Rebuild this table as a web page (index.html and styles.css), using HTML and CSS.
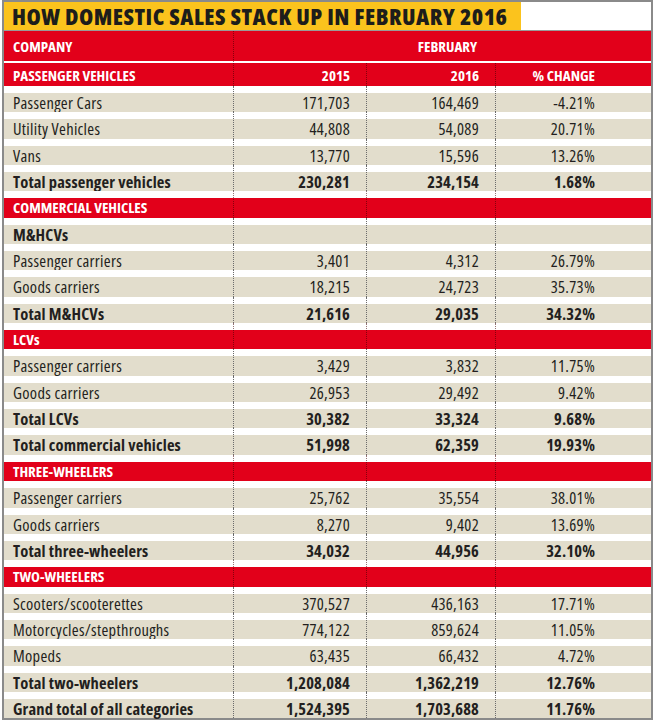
FILE: index.html
```html
<!DOCTYPE html>
<html>
<head>
<meta charset="utf-8">
<link rel="stylesheet" href="styles.css">
</head>
<body>
<div class="frame">
  <div class="title-bar"><div class="title">HOW DOMESTIC SALES STACK UP IN FEBRUARY 2016</div></div>
  <div class="row head1"><div class="cell">COMPANY</div><div class="cell feb">FEBRUARY</div></div>
  <div class="row head2"><div class="cell">PASSENGER VEHICLES</div><div class="cell num">2015</div><div class="cell num">2016</div><div class="cell pct">% CHANGE</div></div>

  <div class="row data"><div class="cell">Passenger Cars</div><div class="cell num">171,703</div><div class="cell num">164,469</div><div class="cell pct">-4.21%</div></div>
  <div class="row data"><div class="cell">Utility Vehicles</div><div class="cell num">44,808</div><div class="cell num">54,089</div><div class="cell pct">20.71%</div></div>
  <div class="row data"><div class="cell">Vans</div><div class="cell num">13,770</div><div class="cell num">15,596</div><div class="cell pct">13.26%</div></div>
  <div class="row data bold"><div class="cell">Total passenger vehicles</div><div class="cell num">230,281</div><div class="cell num">234,154</div><div class="cell pct">1.68%</div></div>

  <div class="row section"><div class="cell">COMMERCIAL VEHICLES</div><div class="cell"></div><div class="cell"></div><div class="cell"></div></div>
  <div class="row data bold"><div class="cell">M&amp;HCVs</div><div class="cell"></div><div class="cell"></div><div class="cell"></div></div>
  <div class="row data"><div class="cell">Passenger carriers</div><div class="cell num">3,401</div><div class="cell num">4,312</div><div class="cell pct">26.79%</div></div>
  <div class="row data"><div class="cell">Goods carriers</div><div class="cell num">18,215</div><div class="cell num">24,723</div><div class="cell pct">35.73%</div></div>
  <div class="row data bold"><div class="cell">Total M&amp;HCVs</div><div class="cell num">21,616</div><div class="cell num">29,035</div><div class="cell pct">34.32%</div></div>

  <div class="row section"><div class="cell">LCVs</div><div class="cell"></div><div class="cell"></div><div class="cell"></div></div>
  <div class="row data"><div class="cell">Passenger carriers</div><div class="cell num">3,429</div><div class="cell num">3,832</div><div class="cell pct">11.75%</div></div>
  <div class="row data"><div class="cell">Goods carriers</div><div class="cell num">26,953</div><div class="cell num">29,492</div><div class="cell pct">9.42%</div></div>
  <div class="row data bold"><div class="cell">Total LCVs</div><div class="cell num">30,382</div><div class="cell num">33,324</div><div class="cell pct">9.68%</div></div>
  <div class="row data bold"><div class="cell">Total commercial vehicles</div><div class="cell num">51,998</div><div class="cell num">62,359</div><div class="cell pct">19.93%</div></div>

  <div class="row section"><div class="cell">THREE-WHEELERS</div><div class="cell"></div><div class="cell"></div><div class="cell"></div></div>
  <div class="row data"><div class="cell">Passenger carriers</div><div class="cell num">25,762</div><div class="cell num">35,554</div><div class="cell pct">38.01%</div></div>
  <div class="row data"><div class="cell">Goods carriers</div><div class="cell num">8,270</div><div class="cell num">9,402</div><div class="cell pct">13.69%</div></div>
  <div class="row data bold"><div class="cell">Total three-wheelers</div><div class="cell num">34,032</div><div class="cell num">44,956</div><div class="cell pct">32.10%</div></div>

  <div class="row section"><div class="cell">TWO-WHEELERS</div><div class="cell"></div><div class="cell"></div><div class="cell"></div></div>
  <div class="row data"><div class="cell">Scooters/scooterettes</div><div class="cell num">370,527</div><div class="cell num">436,163</div><div class="cell pct">17.71%</div></div>
  <div class="row data"><div class="cell">Motorcycles/stepthroughs</div><div class="cell num">774,122</div><div class="cell num">859,624</div><div class="cell pct">11.05%</div></div>
  <div class="row data"><div class="cell">Mopeds</div><div class="cell num">63,435</div><div class="cell num">66,432</div><div class="cell pct">4.72%</div></div>
  <div class="row data bold"><div class="cell">Total two-wheelers</div><div class="cell num">1,208,084</div><div class="cell num">1,362,219</div><div class="cell pct">12.76%</div></div>
  <div class="row data bold"><div class="cell">Grand total of all categories</div><div class="cell num">1,524,395</div><div class="cell num">1,703,688</div><div class="cell pct">11.76%</div></div>
</div>
</body>
</html>
```
FILE: styles.css
```css
body {
  margin: 0;
  background: #ffffff;
  font-family: "Open Sans", "Liberation Sans", sans-serif;
  color: #231f20;
}

.frame {
  margin-left: 2px;
  width: 647px;
  border: 2px solid #8a8a8a;
}

.title-bar {
  display: flex;
  height: 28px;
  border-bottom: 1px solid #9a9a9a;
}

.title {
  width: 517px;
  box-sizing: border-box;
  background: #fbc31d;
  padding-left: 8px;
  font-weight: 800;
  font-stretch: 75%;
  font-size: 23px;
  letter-spacing: 0.5px;
  line-height: 29px;
  color: #1d1d1b;
  white-space: nowrap;
}

.row {
  display: grid;
  grid-template-columns: 229px 133px 129px 156px;
}

.cell {
  box-sizing: border-box;
  padding-left: 9px;
  white-space: nowrap;
}

.row .cell + .cell {
  border-left: 1px dotted #6b6b6b;
}

.num {
  text-align: right;
  padding-right: 16px;
}

.pct {
  text-align: right;
  padding-right: 56px;
}

.head1,
.head2,
.section {
  color: #ffffff;
  font-weight: 700;
  font-stretch: 75%;
  font-size: 15px;
}

.head1 {
  background: #e2001a;
  height: 30px;
  line-height: 31px;
}

.head1 .feb {
  grid-column: span 3;
  text-align: center;
  padding-left: 10px;
}

.head1 .cell + .cell,
.head2 .cell + .cell,
.section .cell + .cell {
  border-left-color: rgba(60, 0, 0, 0.55);
}

.head2 {
  background: #e2001a;
  border-top: 2px solid #ffffff;
  height: 23px;
  line-height: 25px;
}

.data .cell,
.section .cell {
  height: 26.35px;
  padding-top: 7px;
  line-height: 19.35px;
}

.data .cell {
  font-size: 16.5px;
  font-stretch: 75%;
  letter-spacing: 0.3px;
  background: linear-gradient(#ffffff 0, #ffffff 7px, #e2ddcc 7px, #e2ddcc 100%);
}

.section .cell {
  background: linear-gradient(#ffffff 0, #ffffff 7px, #e2001a 7px, #e2001a 100%);
}

.bold .cell {
  font-weight: 700;
  letter-spacing: 0.15px;
}
```
